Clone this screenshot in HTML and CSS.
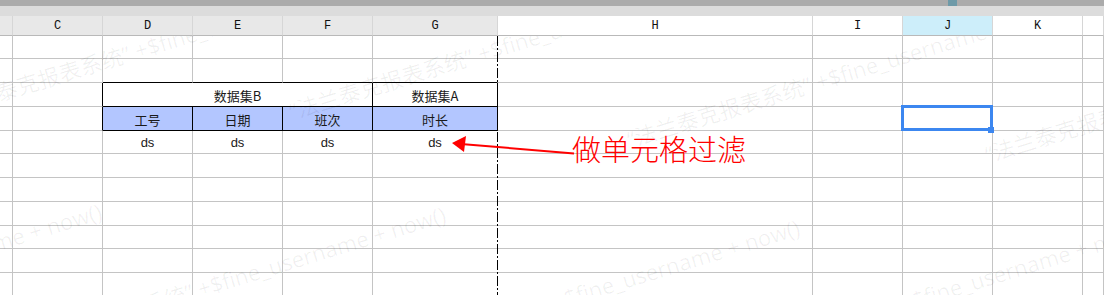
FILE: index.html
```html
<!DOCTYPE html>
<html lang="zh-CN">
<head>
<meta charset="utf-8">
<title>Sheet</title>
<link rel="stylesheet" href="styles.css">
</head>
<body>
<div class="page">
  <div class="topbar"><div class="tab"></div></div>
  <div class="subbar"></div>
  <div class="sheet">
    <!-- header -->
    <div class="hc hg"></div>
    <div class="hc hg">C</div>
    <div class="hc hg">D</div>
    <div class="hc hg">E</div>
    <div class="hc hg">F</div>
    <div class="hc hg">G</div>
    <div class="hc">H</div>
    <div class="hc">I</div>
    <div class="hc hsel">J</div>
    <div class="hc">K</div>
    <div class="hc"></div>

    <!-- row 1 -->
    <div class="c"></div><div class="c"></div><div class="c"></div><div class="c"></div><div class="c"></div><div class="c nog"></div><div class="c"></div><div class="c"></div><div class="c"></div><div class="c"></div><div class="c"></div>
    <!-- row 2 -->
    <div class="c"></div><div class="c"></div><div class="c bb"></div><div class="c bb"></div><div class="c bb"></div><div class="c nog bb"></div><div class="c"></div><div class="c"></div><div class="c"></div><div class="c"></div><div class="c"></div>
    <!-- row 3 -->
    <div class="c"></div><div class="c br"></div><div class="c span3 bb br txt">数据集B</div><div class="c bb br txt">数据集A</div><div class="c"></div><div class="c"></div><div class="c"></div><div class="c"></div><div class="c"></div>
    <!-- row 4 -->
    <div class="c"></div><div class="c br"></div><div class="c blue bb br txt">工号</div><div class="c blue bb br txt">日期</div><div class="c blue bb br txt">班次</div><div class="c blue bb br txt">时长</div><div class="c"></div><div class="c"></div><div class="c selcell"><div class="selbox"></div><div class="handle"></div></div><div class="c"></div><div class="c"></div>
    <!-- row 5 -->
    <div class="c"></div><div class="c"></div><div class="c ds">ds</div><div class="c ds">ds</div><div class="c ds">ds</div><div class="c nog ds">ds</div><div class="c"></div><div class="c"></div><div class="c"></div><div class="c"></div><div class="c"></div>
    <!-- rows 6-11 -->
    <div class="c"></div><div class="c"></div><div class="c"></div><div class="c"></div><div class="c"></div><div class="c nog"></div><div class="c"></div><div class="c"></div><div class="c"></div><div class="c"></div><div class="c"></div>
    <div class="c"></div><div class="c"></div><div class="c"></div><div class="c"></div><div class="c"></div><div class="c nog"></div><div class="c"></div><div class="c"></div><div class="c"></div><div class="c"></div><div class="c"></div>
    <div class="c"></div><div class="c"></div><div class="c"></div><div class="c"></div><div class="c"></div><div class="c nog"></div><div class="c"></div><div class="c"></div><div class="c"></div><div class="c"></div><div class="c"></div>
    <div class="c"></div><div class="c"></div><div class="c"></div><div class="c"></div><div class="c"></div><div class="c nog"></div><div class="c"></div><div class="c"></div><div class="c"></div><div class="c"></div><div class="c"></div>
    <div class="c"></div><div class="c"></div><div class="c"></div><div class="c"></div><div class="c"></div><div class="c nog"></div><div class="c"></div><div class="c"></div><div class="c"></div><div class="c"></div><div class="c"></div>
    <div class="c"></div><div class="c"></div><div class="c"></div><div class="c"></div><div class="c"></div><div class="c nog"></div><div class="c"></div><div class="c"></div><div class="c"></div><div class="c"></div><div class="c"></div>
  </div>

  <div class="pagebreak"></div>

  <div class="watermarks">
    <div class="wm wm1"><span class="pre">“法兰泰克报表系统” + </span><span class="suf">$fine_username + now()</span></div>
    <div class="wm wm2"><span class="pre">“法兰泰克报表系统” + </span><span class="suf">$fine_username + now()</span></div>
    <div class="wm wm3"><span class="pre">“法兰泰克报表系统” + </span><span class="suf">$fine_username + now()</span></div>
    <div class="wm wm4"><span class="pre">“法兰泰克报表系统” + </span><span class="suf">$fine_username + now()</span></div>
    <div class="wm wm5"><span class="pre">“法兰泰克报表系统” + </span><span class="suf">$fine_username + now()</span></div>
    <div class="wm wm6"><span class="pre">“法兰泰克报表系统” + </span><span class="suf">$fine_username + now()</span></div>
    <div class="wm wm7"><span class="pre">“法兰泰克报表系统” + </span><span class="suf">$fine_username + now()</span></div>
    <div class="wm wm8"><span class="pre">“法兰泰克报表系统” + </span><span class="suf">$fine_username + now()</span></div>
  </div>

  <svg class="arrow" width="130" height="26" viewBox="0 0 130 26" xmlns="http://www.w3.org/2000/svg">
    <line x1="13" y1="12" x2="126" y2="21.5" stroke="#ff0000" stroke-width="2"/>
    <polygon points="4,11 18,4 16,20" fill="#ff0000"/>
  </svg>
  <div class="note">做单元格过滤</div>
</div>
</body>
</html>
```

FILE: styles.css
```css
html, body {
  margin: 0;
  padding: 0;
  background: #ffffff;
}

.page {
  position: relative;
  width: 1104px;
  height: 295px;
  overflow: hidden;
  font-family: "Noto Sans CJK SC", "Liberation Sans", sans-serif;
}

.topbar {
  height: 6px;
  background: #ababab;
  display: flex;
}

.tab {
  margin-left: 948px;
  width: 9px;
  height: 6px;
  background: #6e9aa8;
}

.subbar {
  height: 10px;
  background: #dcdcdc;
}

.sheet {
  display: grid;
  grid-template-columns: 13px 90px 90px 90px 90px 125px 315px 90px 90px 90px 21px;
  grid-template-rows: 20px 23px 24px 24px 24px 23px 24px 24px 24px 23px 24px 23px;
}

.hc {
  box-sizing: border-box;
  border-right: 1px solid #d6d6d6;
  border-bottom: 1px solid #b9b9b9;
  background: #ffffff;
  display: flex;
  align-items: center;
  justify-content: center;
  font-family: "Liberation Mono", "DejaVu Sans Mono", monospace;
  font-size: 12px;
  color: #111111;
}

.hg {
  background: #e8e8e8;
}

.hsel {
  background: #cdeefa;
}

.c {
  box-sizing: border-box;
  border-right: 1px solid #c4c4c4;
  border-bottom: 1px solid #c4c4c4;
  display: flex;
  align-items: center;
  justify-content: center;
  font-size: 13px;
  color: #1a1a1a;
}

.nog {
  border-right-color: #ffffff;
}

.bb {
  border-bottom-color: #000000;
}

.br {
  border-right-color: #000000;
}

.span3 {
  grid-column: span 3;
}

.txt {
  font-family: "Noto Sans CJK SC", sans-serif;
  font-size: 13px;
  padding-top: 1px;
}

.blue {
  background: #b3c6ff;
}

.ds {
  font-family: "Liberation Sans", "Noto Sans", sans-serif;
  font-size: 13px;
  color: #1a1a1a;
}

.selcell {
  position: relative;
}

.selbox {
  position: absolute;
  left: -2px;
  top: -2px;
  width: 92px;
  height: 26px;
  box-sizing: border-box;
  border: 3px solid #3c87f0;
}

.handle {
  position: absolute;
  left: 85px;
  top: 20px;
  width: 6px;
  height: 6px;
  background: #3c87f0;
}

.pagebreak {
  position: absolute;
  left: 497px;
  top: 36px;
  width: 1px;
  height: 260px;
  background: repeating-linear-gradient(to bottom, #000 0 10px, transparent 10px 12px, #000 12px 14px, transparent 14px 16px);
}

.watermarks {
  position: absolute;
  left: 0;
  top: 36px;
  width: 1104px;
  height: 259px;
  overflow: hidden;
  pointer-events: none;
}

.wm {
  position: absolute;
  width: 0;
  height: 0;
  transform: rotate(-17deg);
  transform-origin: 0 0;
}

.wm span {
  position: absolute;
  top: -15px;
  white-space: nowrap;
  font-family: "Open Sans", "Noto Sans CJK SC", sans-serif;
  font-size: 22px;
  line-height: 30px;
  color: rgba(0, 0, 0, 0.06);
}

.wm .pre {
  right: 0;
}

.wm .suf {
  left: 0;
}

.wm1 { left: 147px; top: 11px; }
.wm2 { left: 490px; top: 14px; }
.wm3 { left: 828px; top: 42px; }
.wm4 { left: 1186px; top: 57px; }
.wm5 { left: -134px; top: 246px; }
.wm6 { left: 210px; top: 249px; }
.wm7 { left: 564px; top: 262px; }
.wm8 { left: 912px; top: 264px; }

.arrow {
  position: absolute;
  left: 448px;
  top: 132px;
}

.note {
  position: absolute;
  left: 572px;
  top: 130px;
  font-family: "Noto Sans CJK SC", sans-serif;
  font-weight: 300;
  font-size: 29px;
  line-height: 36px;
  color: #ff0000;
  white-space: nowrap;
}
```
